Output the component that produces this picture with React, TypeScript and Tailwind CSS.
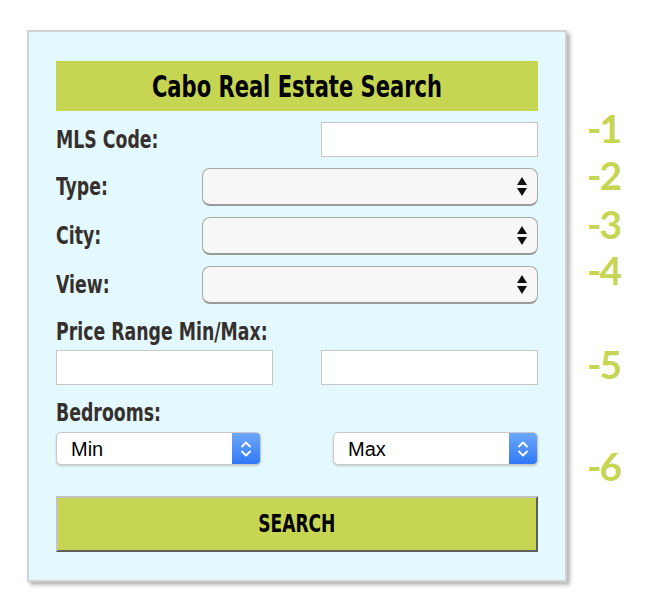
import React from "react";

const condensed =
  "font-['Liberation_Sans_Narrow','DejaVu_Sans_Condensed','Liberation_Sans',sans-serif] [font-stretch:condensed] font-bold";

function Label({ children }: { children: React.ReactNode }) {
  return (
    <span
      className={`${condensed} inline-block origin-left scale-x-[0.77] whitespace-nowrap text-[25px] leading-[24px] text-[#35302d]`}
    >
      {children}
    </span>
  );
}

function TextBox({ width }: { width: string }) {
  return <div className={`${width} h-[35px] bg-white border border-[#c6c6c6]`} />;
}

function UpDownArrows() {
  return (
    <svg width="10" height="20" viewBox="0 0 10 20" className="block">
      <path d="M5 0 L10 8 L0 8 Z" fill="#111" />
      <path d="M0 11 L10 11 L5 19 Z" fill="#111" />
    </svg>
  );
}

function PlainSelect() {
  return (
    <div className="w-[336px] h-[38px] rounded-[8px] bg-[#f7f7f7] border border-[#a9a9a9] border-b-2 border-b-[#9a9a9a] flex items-center justify-end pr-[10px]">
      <UpDownArrows />
    </div>
  );
}

function MacSelect({ label }: { label: string }) {
  return (
    <div className="w-[205px] h-[33px] rounded-[5px] bg-white border border-[#c9c9c9] shadow-[0_1px_2px_rgba(0,0,0,0.2)] flex overflow-hidden">
      <div className="flex-1 flex items-center pl-[14px] font-['Liberation_Sans',Arial,sans-serif] text-[20px] text-black">
        {label}
      </div>
      <div className="w-[28px] h-full bg-gradient-to-b from-[#6ea8fb] to-[#2e78f4] flex items-center justify-center">
        <svg width="12" height="20" viewBox="0 0 12 20">
          <path d="M2 7.5 L6 3.5 L10 7.5" stroke="#fff" strokeWidth="1.8" fill="none" strokeLinecap="round" strokeLinejoin="round" />
          <path d="M2 12.5 L6 16.5 L10 12.5" stroke="#fff" strokeWidth="1.8" fill="none" strokeLinecap="round" strokeLinejoin="round" />
        </svg>
      </div>
    </div>
  );
}

function StepNumber({ n, className }: { n: number; className: string }) {
  return <div className={`h-[40px] leading-[40px] ${className}`}>-{n}</div>;
}

export default function App() {
  return (
    <div className="w-[650px] h-[599px] bg-white flex items-start pl-[27px] pt-[30px]">
      <div className="w-[540px] border-2 border-[#d2d2d2] bg-[#e4f9fd] shadow-[3px_3px_4px_rgba(0,0,0,0.3)] px-[27px] pt-[29px] pb-[28px]">
        <div className="h-[50px] bg-[#c6d653] flex items-center justify-center">
          <span className={`${condensed} inline-block scale-x-[0.78] whitespace-nowrap text-[30px] text-black`}>
            Cabo Real Estate Search
          </span>
        </div>

        <div className="mt-[11px] h-[35px] flex items-center justify-between">
          <Label>MLS Code:</Label>
          <TextBox width="w-[217px]" />
        </div>
        <div className="mt-[11px] flex items-center justify-between">
          <Label>Type:</Label>
          <PlainSelect />
        </div>
        <div className="mt-[11px] flex items-center justify-between">
          <Label>City:</Label>
          <PlainSelect />
        </div>
        <div className="mt-[11px] flex items-center justify-between">
          <Label>View:</Label>
          <PlainSelect />
        </div>

        <div className="mt-[16px] h-[24px] flex items-center">
          <Label>Price Range Min/Max:</Label>
        </div>
        <div className="mt-[6px] flex justify-between">
          <TextBox width="w-[217px]" />
          <TextBox width="w-[217px]" />
        </div>

        <div className="mt-[16px] h-[24px] flex items-center">
          <Label>Bedrooms:</Label>
        </div>
        <div className="mt-[7px] flex justify-between">
          <MacSelect label="Min" />
          <MacSelect label="Max" />
        </div>

        <button
          type="button"
          className="mt-[31px] w-full h-[56px] bg-[#c6d653] border-2 border-t-[#c4c4c4] border-l-[#c4c4c4] border-b-[#5e5e5e] border-r-[#5e5e5e] flex items-center justify-center"
        >
          <span className={`${condensed} inline-block scale-x-[0.76] text-[25px] text-black`}>SEARCH</span>
        </button>
      </div>

      <div className="ml-[20px] pt-[78px] flex flex-col font-['Lato','Noto_Sans',sans-serif] font-bold text-[39px] tracking-[-2px] text-[#c6d653]">
        <StepNumber n={1} className="" />
        <StepNumber n={2} className="mt-[7px]" />
        <StepNumber n={3} className="mt-[9px]" />
        <StepNumber n={4} className="mt-[6px]" />
        <StepNumber n={5} className="mt-[54px]" />
        <StepNumber n={6} className="mt-[62px]" />
      </div>
    </div>
  );
}
